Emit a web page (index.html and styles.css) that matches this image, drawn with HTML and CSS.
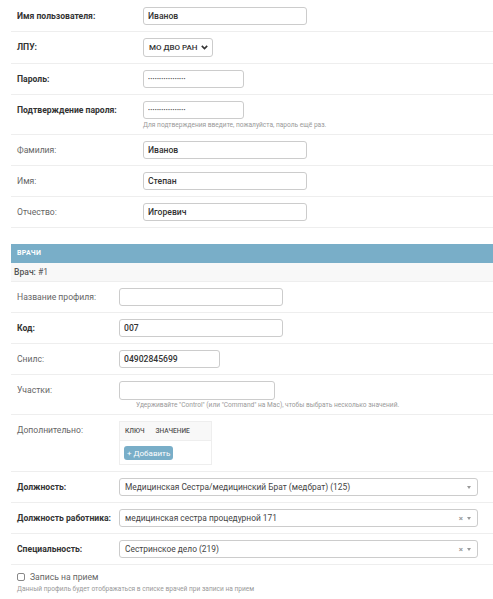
FILE: index.html
```html
<!DOCTYPE html>
<html lang="ru">
<head>
    <meta charset="UTF-8">
    <title>Изменить пользователя</title>
    <link rel="stylesheet" href="styles.css">
</head>
<body>
    <div id="content">
        <fieldset class="module">
            <div class="form-row">
                <label class="required wide">Имя пользователя:</label>
                <input class="text-input vtext" type="text" value="Иванов">
            </div>
            <div class="form-row">
                <label class="required wide">ЛПУ:</label>
                <div class="plain-select">
                    <span>МО ДВО РАН</span>
                    <svg width="7" height="5" viewBox="0 0 7 5"><path d="M0.8 0.9 L3.5 3.6 L6.2 0.9" fill="none" stroke="#333" stroke-width="1.6"/></svg>
                </div>
            </div>
            <div class="form-row">
                <label class="required wide">Пароль:</label>
                <input class="text-input short secret" type="text" value="•••••••••••••••••">
            </div>
            <div class="form-row with-help">
                <label class="required wide">Подтверждение пароля:</label>
                <div class="field-box">
                    <input class="text-input short secret" type="text" value="•••••••••••••••••">
                    <div class="help">Для подтверждения введите, пожалуйста, пароль ещё раз.</div>
                </div>
            </div>
            <div class="form-row">
                <label class="wide">Фамилия:</label>
                <input class="text-input vtext" type="text" value="Иванов">
            </div>
            <div class="form-row">
                <label class="wide">Имя:</label>
                <input class="text-input vtext" type="text" value="Степан">
            </div>
            <div class="form-row">
                <label class="wide">Отчество:</label>
                <input class="text-input vtext" type="text" value="Игоревич">
            </div>
        </fieldset>

        <div class="inline-group">
            <h2 class="caption">Врачи</h2>
            <h3 class="inline-title"><b>Врач:</b> #1</h3>

            <div class="form-row">
                <label>Название профиля:</label>
                <input class="text-input vtext" type="text" value="">
            </div>
            <div class="form-row">
                <label class="required">Код:</label>
                <input class="text-input vtext" type="text" value="007">
            </div>
            <div class="form-row">
                <label>Снилс:</label>
                <input class="text-input short" type="text" value="04902845699">
            </div>
            <div class="form-row with-help">
                <label>Участки:</label>
                <div class="field-box">
                    <div class="multi-select"></div>
                    <div class="help indent">Удерживайте "Control" (или "Command" на Mac), чтобы выбрать несколько значений.</div>
                </div>
            </div>
            <div class="form-row">
                <label>Дополнительно:</label>
                <div class="kv-table">
                    <div class="kv-head">
                        <span>Ключ</span>
                        <span>Значение</span>
                    </div>
                    <div class="kv-body">
                        <button class="add-btn">+ Добавить</button>
                    </div>
                </div>
            </div>
            <div class="form-row">
                <label class="required">Должность:</label>
                <div class="select2">
                    <span class="s2-text">Медицинская Сестра/медицинский Брат (медбрат) (125)</span>
                    <span class="s2-arrow"></span>
                </div>
            </div>
            <div class="form-row">
                <label class="required">Должность работника:</label>
                <div class="select2">
                    <span class="s2-text">медицинская сестра процедурной 171</span>
                    <span class="s2-clear">×</span>
                    <span class="s2-arrow"></span>
                </div>
            </div>
            <div class="form-row">
                <label class="required">Специальность:</label>
                <div class="select2">
                    <span class="s2-text">Сестринское дело (219)</span>
                    <span class="s2-clear">×</span>
                    <span class="s2-arrow"></span>
                </div>
            </div>
            <div class="form-row checkbox-row">
                <div class="check-line">
                    <span class="checkbox"></span>
                    <span class="check-label">Запись на прием</span>
                </div>
                <div class="help">Данный профиль будет отображаться в списке врачей при записи на прием</div>
            </div>
        </div>
    </div>
</body>
</html>
```

FILE: styles.css
```css
body {
    margin: 0;
    padding: 0;
    font-family: Roboto, "Liberation Sans", sans-serif;
    background-color: #fff;
    color: #333;
    font-size: 9px;
}

#content {
    padding: 1px 0 0 11px;
}

fieldset {
    margin: 0;
    padding: 0;
    border: none;
}

/* each field sits in its own row with a hairline under it */
.form-row {
    display: flex;
    align-items: flex-start;
    padding: 6px 6px;
    border-bottom: 1px solid #eee;
}

.form-row label {
    width: 102px;
    flex-shrink: 0;
    line-height: 18px;
    color: #666;
    font-size: 8.6px;
}

.form-row label.wide {
    width: 126px;
}

.form-row label.required {
    color: #333;
    font-weight: 700;
}

.text-input {
    box-sizing: border-box;
    height: 18px;
    margin: 0;
    padding: 0 4px;
    border: 1px solid #ccc;
    border-radius: 3px;
    font-family: Roboto, "Liberation Sans", sans-serif;
    font-size: 8.6px;
    font-weight: 500;
    color: #333;
    background: #fff;
}

.text-input.vtext {
    width: 164px;
}

.text-input.short {
    width: 101px;
}

/* masked password value */
.text-input.secret {
    font-size: 5.5px;
    letter-spacing: 0.3px;
    color: #444;
}

.plain-select {
    box-sizing: border-box;
    width: 70px;
    height: 19px;
    display: flex;
    align-items: center;
    justify-content: space-between;
    padding: 0 4px 0 5px;
    border: 1px solid #ccc;
    border-radius: 3px;
    font-size: 8px;
    font-weight: 500;
    white-space: nowrap;
}

.with-help {
    padding-bottom: 5px;
}

.help {
    margin-top: 2px;
    font-size: 6.6px;
    line-height: 8px;
    color: #999;
}

.help.indent {
    padding-left: 17px;
    margin-top: 1px;
}

/* inline block for the doctors */
.inline-group {
    margin-top: 16px;
}

.caption {
    margin: 0;
    height: 19px;
    line-height: 19px;
    padding: 0 6px;
    background-color: #79aec8;
    color: #fff;
    font-size: 7px;
    font-weight: 700;
    text-transform: uppercase;
    letter-spacing: 0.3px;
}

.inline-title {
    margin: 0;
    height: 18px;
    line-height: 18px;
    padding: 0 3px;
    background-color: #f8f8f8;
    border-bottom: 1px solid #eee;
    color: #555;
    font-size: 8.6px;
    font-weight: 400;
}

.inline-title b {
    font-weight: 500;
}

.multi-select {
    box-sizing: border-box;
    width: 156px;
    height: 19px;
    border: 1px solid #ccc;
    border-radius: 3px;
}

.kv-table {
    width: 91px;
    border: 1px solid #eee;
}

.kv-head {
    display: flex;
    gap: 11px;
    height: 18px;
    align-items: center;
    padding: 0 5px;
    background-color: #f8f8f8;
    border-bottom: 1px solid #eee;
    font-size: 6.6px;
    font-weight: 500;
    color: #555;
    text-transform: uppercase;
}

.kv-body {
    padding: 5px 4px 4px;
}

.add-btn {
    display: block;
    height: 14px;
    padding: 0 3px;
    border: none;
    border-radius: 3px;
    background-color: #79aec8;
    color: #fff;
    font-family: Roboto, "Liberation Sans", sans-serif;
    font-size: 8px;
    cursor: pointer;
}

/* select2 style single selects */
.select2 {
    box-sizing: border-box;
    width: 359px;
    height: 18px;
    display: flex;
    align-items: center;
    padding: 0 5px 0 5px;
    border: 1px solid #ccc;
    border-radius: 3px;
    color: #444;
    font-size: 8.4px;
}

.s2-text {
    flex-grow: 1;
}

.s2-clear {
    font-size: 8px;
    font-weight: 700;
    color: #999;
    margin-right: 4px;
}

.s2-arrow {
    width: 0;
    height: 0;
    border-left: 2.5px solid transparent;
    border-right: 2.5px solid transparent;
    border-top: 3px solid #999;
    margin-right: 1px;
}

.checkbox-row {
    flex-direction: column;
    padding-top: 7px;
}

.check-line {
    display: flex;
    align-items: center;
    gap: 5px;
    height: 10px;
}

.checkbox {
    box-sizing: border-box;
    width: 8px;
    height: 8px;
    border: 1px solid #888;
    border-radius: 2px;
}

.check-label {
    font-size: 8.6px;
    color: #666;
}

.checkbox-row .help {
    margin-top: 3px;
}
```
